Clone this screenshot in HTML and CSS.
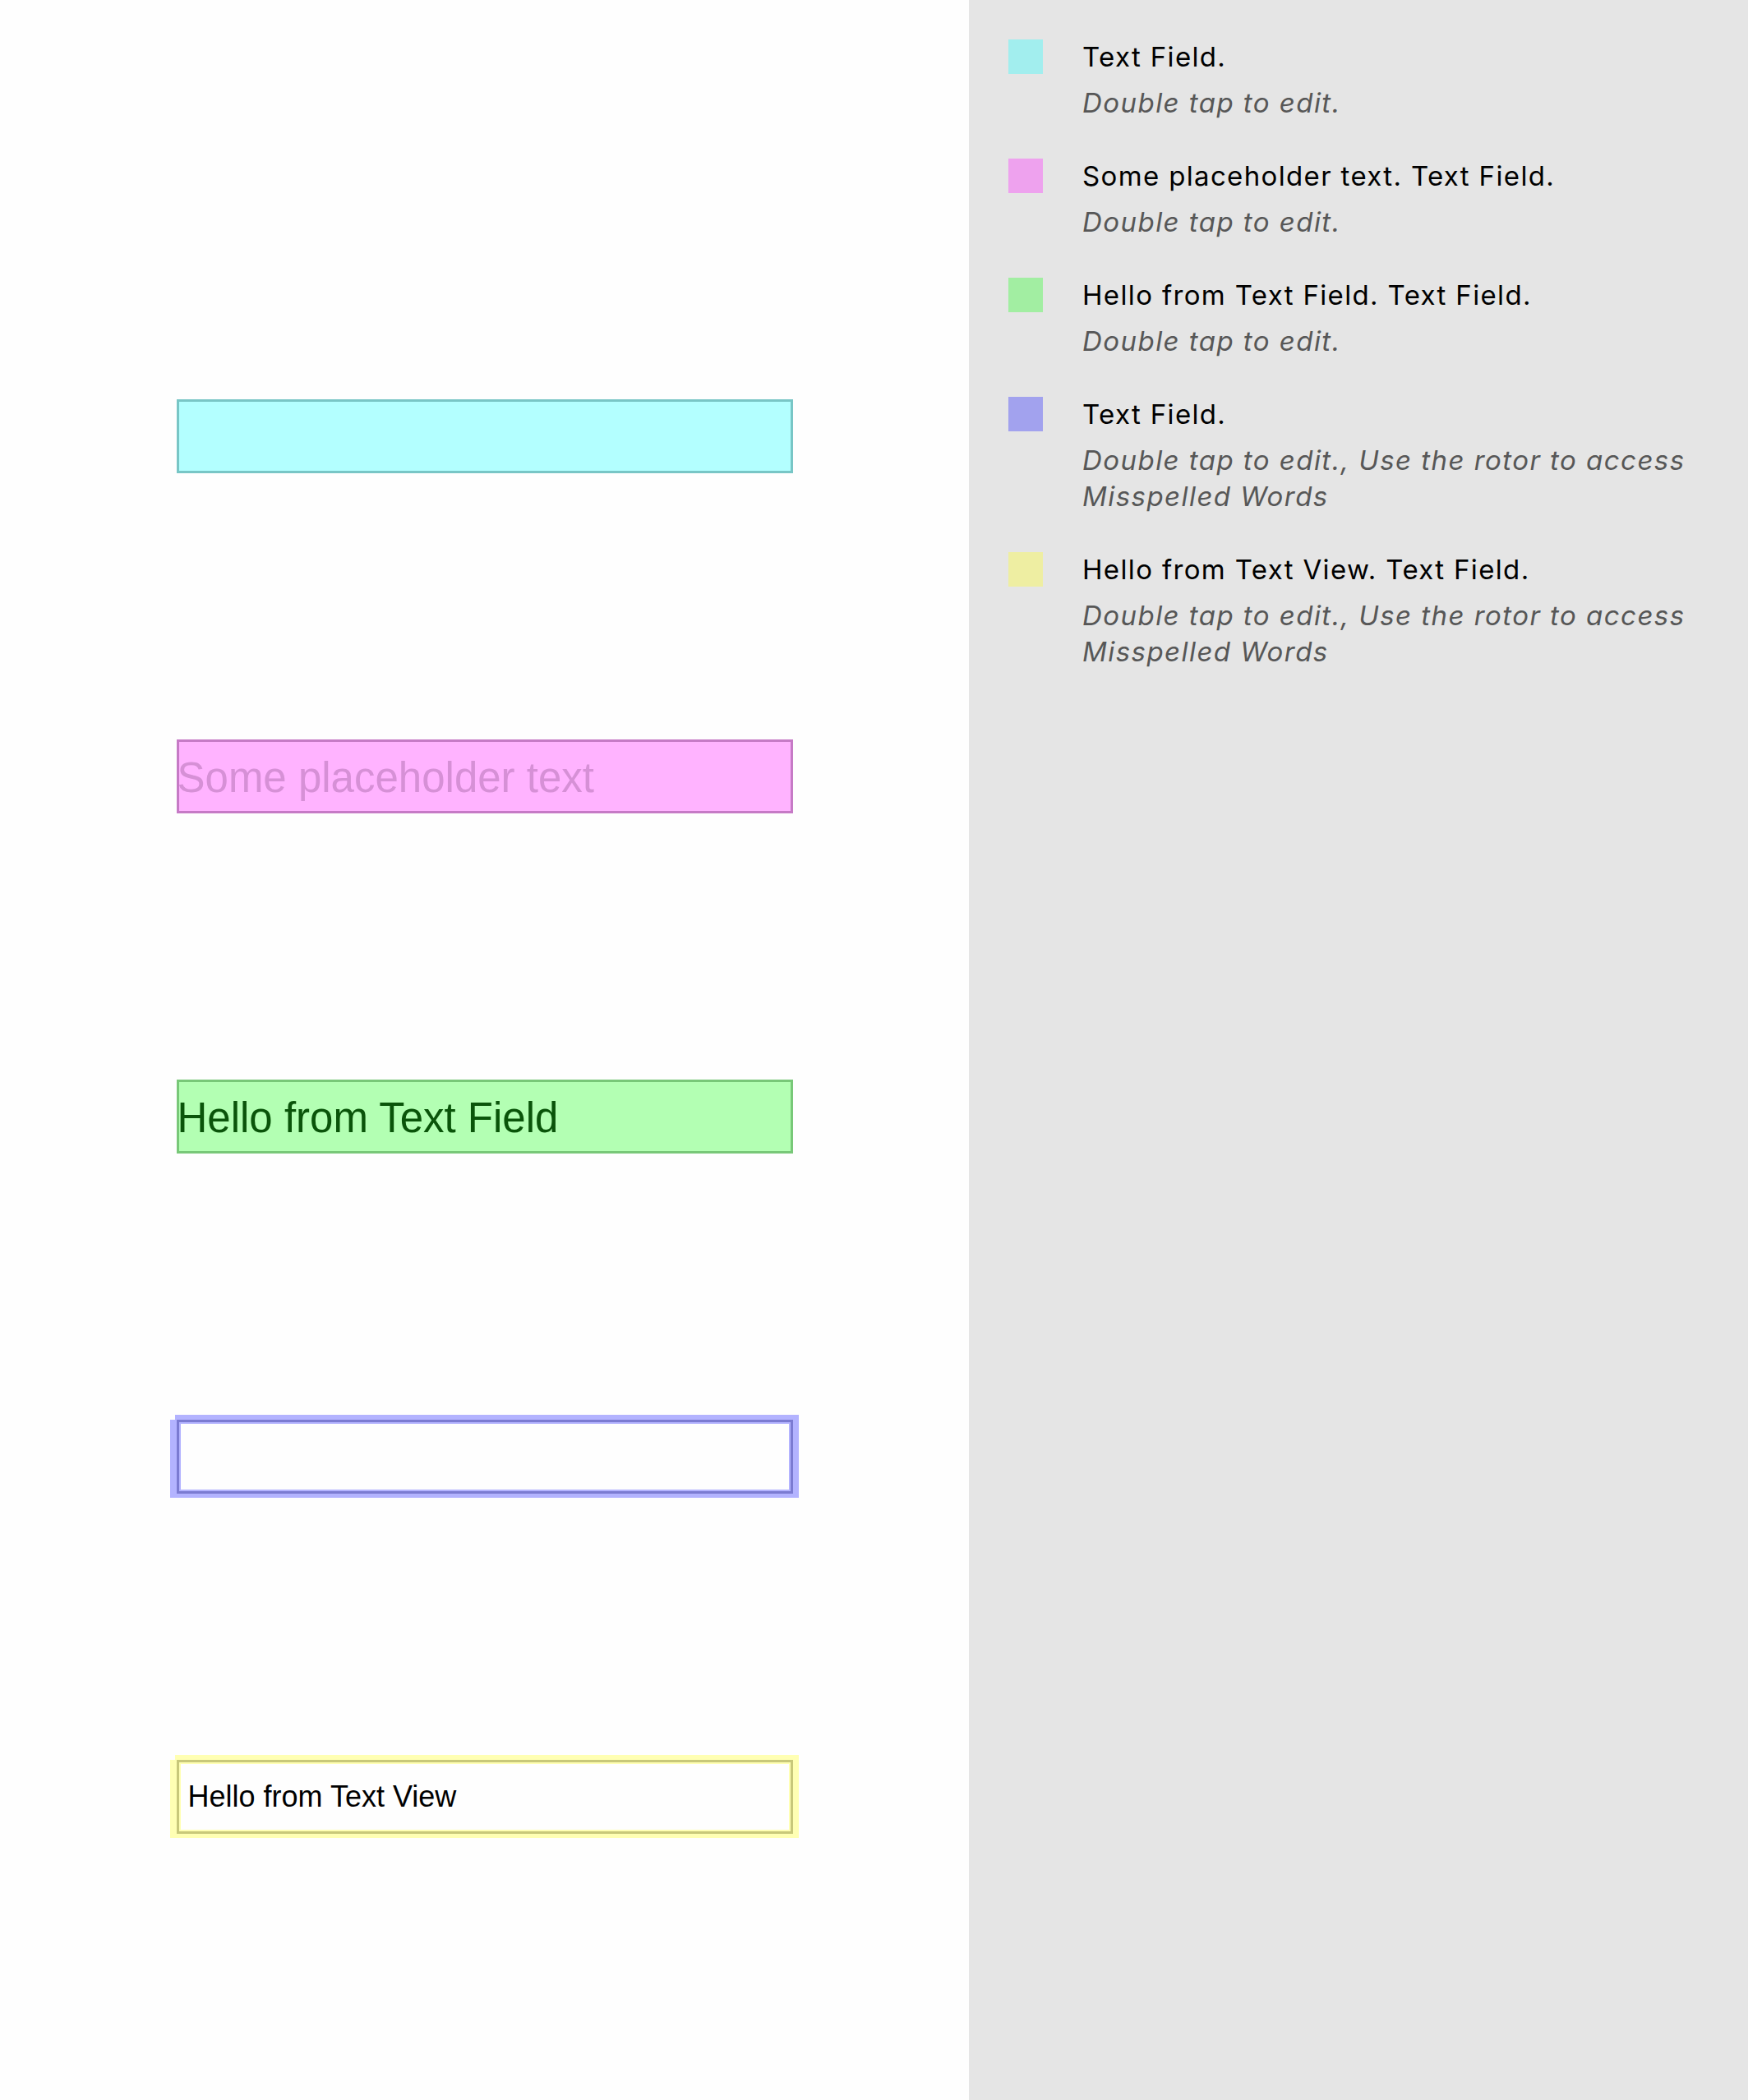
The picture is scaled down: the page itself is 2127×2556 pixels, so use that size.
FILE: index.html
```html
<!DOCTYPE html>
<html>
<head>
<meta charset="utf-8">
<link rel="stylesheet" href="styles.css">
</head>
<body>
<div class="page">
  <div class="canvas">
    <div class="field field-cyan"></div>
    <div class="field field-pink"><span class="placeholder">Some placeholder text</span></div>
    <div class="field field-green">Hello from Text Field</div>
    <div class="field field-blue"></div>
    <div class="field field-yellow">Hello from Text View</div>
  </div>
  <div class="panel">
    <div class="item">
      <div class="swatch sw-cyan"></div>
      <div class="info">
        <div class="title">Text Field.</div>
        <div class="desc">Double tap to edit.</div>
      </div>
    </div>
    <div class="item">
      <div class="swatch sw-pink"></div>
      <div class="info">
        <div class="title">Some placeholder text. Text Field.</div>
        <div class="desc">Double tap to edit.</div>
      </div>
    </div>
    <div class="item">
      <div class="swatch sw-green"></div>
      <div class="info">
        <div class="title">Hello from Text Field. Text Field.</div>
        <div class="desc">Double tap to edit.</div>
      </div>
    </div>
    <div class="item">
      <div class="swatch sw-blue"></div>
      <div class="info">
        <div class="title">Text Field.</div>
        <div class="desc">Double tap to edit., Use the rotor to access Misspelled Words</div>
      </div>
    </div>
    <div class="item">
      <div class="swatch sw-yellow"></div>
      <div class="info">
        <div class="title">Hello from Text View. Text Field.</div>
        <div class="desc">Double tap to edit., Use the rotor to access Misspelled Words</div>
      </div>
    </div>
  </div>
</div>
</body>
</html>
```
FILE: styles.css
```css
html, body {
  margin: 0;
  padding: 0;
}
body {
  width: 2127px;
  height: 2556px;
  overflow: hidden;
  background: #fefefe;
}
.page {
  display: flex;
  height: 2556px;
}
.canvas {
  width: 1179px;
  flex: none;
  background: #fefefe;
  display: flex;
  flex-direction: column;
  align-items: center;
  padding-top: 486px;
  gap: 324px;
  box-sizing: border-box;
}
.field {
  width: 750px;
  height: 90px;
  box-sizing: border-box;
  border: 3px solid transparent;
  font-family: "Liberation Sans", Arial, sans-serif;
  font-size: 51px;
  line-height: 80px;
  padding-top: 4px;
  text-indent: -2px;
  white-space: nowrap;
}
.field-cyan {
  background: #b3ffff;
  border-color: #78c6c6;
}
.field-pink {
  background: #ffb3ff;
  border-color: #c67ac6;
}
.placeholder {
  color: #d690d6;
}
.field-green {
  background: #b3ffb3;
  border-color: #78c878;
  color: #0a540a;
}
.field-blue,
.field-yellow {
  background: #fefefe;
}
.field-blue {
  border-color: #7b7bd2;
  box-shadow:
    inset 0 0 0 2px #b3b3ff,
    -2px -6px 0 0 #b3b3ff,
    -8px 0 0 0 #b3b3ff,
    7px -6px 0 0 #b3b3ff,
    0 5px 0 0 #b3b3ff,
    -8px 5px 0 0 #b3b3ff,
    7px 5px 0 0 #b3b3ff;
}
.field-yellow {
  border-color: #c8c87a;
  color: #000;
  font-size: 36px;
  line-height: 84px;
  padding-top: 0;
  padding-left: 11px;
  text-indent: 0;
  box-shadow:
    inset 0 0 0 2px #ffffb3,
    -2px -6px 0 0 #ffffb3,
    -8px 0 0 0 #ffffb3,
    7px -6px 0 0 #ffffb3,
    0 5px 0 0 #ffffb3,
    -8px 5px 0 0 #ffffb3,
    7px 5px 0 0 #ffffb3;
}
.panel {
  flex: 1;
  background: #e5e5e5;
  padding: 48px 40px 0 48px;
  display: flex;
  flex-direction: column;
  gap: 46px;
  font-family: Inter, "Noto Sans", sans-serif;
}
.item {
  display: flex;
  align-items: flex-start;
  gap: 48px;
}
.swatch {
  width: 42px;
  height: 42px;
  flex: none;
}
.sw-cyan { background: #a2eeee; }
.sw-pink { background: #eea2ee; }
.sw-green { background: #a2eea2; }
.sw-blue { background: #a2a2ee; }
.sw-yellow { background: #eeeea2; }
.info {
  display: flex;
  flex-direction: column;
  gap: 13px;
}
.title {
  font-size: 33px;
  line-height: 42px;
  letter-spacing: 1.35px;
  color: #000;
}
.desc {
  font-size: 33px;
  line-height: 44px;
  letter-spacing: 1.45px;
  font-style: italic;
  color: #575757;
}
```
